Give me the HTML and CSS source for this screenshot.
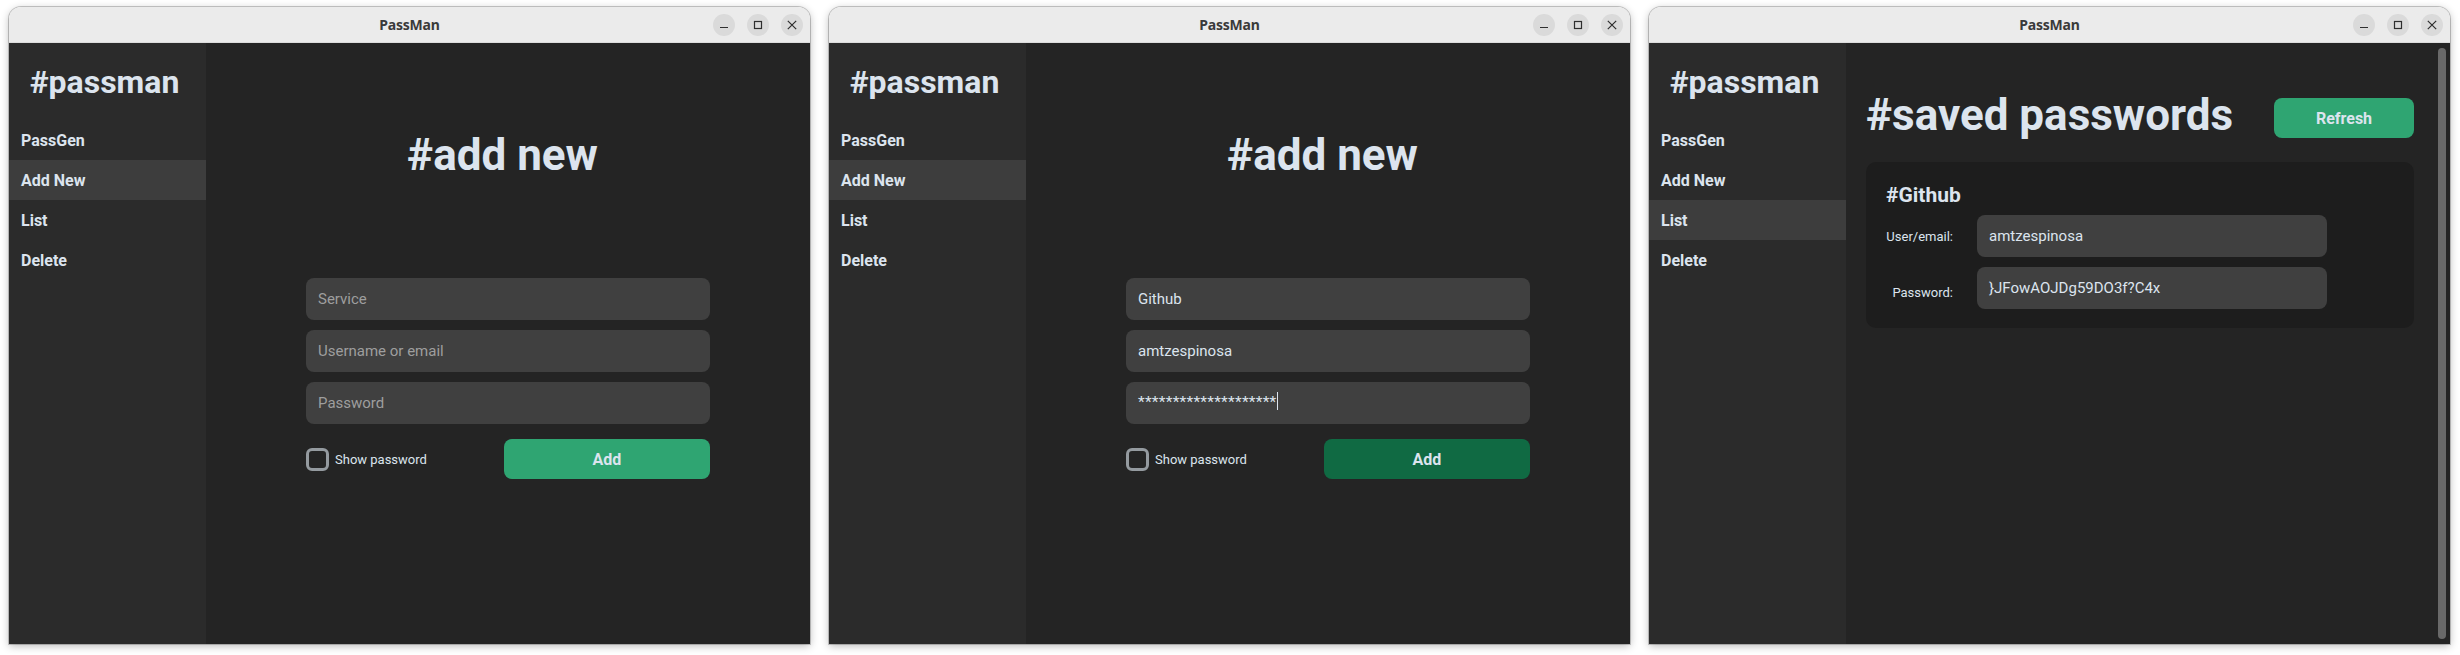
FILE: index.html
```html
<!DOCTYPE html>
<html lang="en">
<head>
<meta charset="utf-8">
<title>PassMan</title>
<link rel="stylesheet" href="styles.css">
</head>
<body>
<div class="desk">

  <!-- Window 1: Add New (empty) -->
  <div class="cell">
    <div class="win">
      <div class="titlebar">
        <span></span>
        <span class="title">PassMan</span>
        <div class="ctrls">
          <span class="ctrl"><svg width="22" height="22" viewBox="0 0 22 22"><path d="M7 13.5h8" class="glyph"/></svg></span>
          <span class="ctrl"><svg width="22" height="22" viewBox="0 0 22 22"><rect x="7.5" y="7.5" width="7" height="7" class="glyph"/></svg></span>
          <span class="ctrl"><svg width="22" height="22" viewBox="0 0 22 22"><path d="M6.8 6.8l8.4 8.4M15.2 6.8l-8.4 8.4" class="glyph"/></svg></span>
        </div>
      </div>
      <div class="content">
        <aside class="side">
          <div class="logo">#passman</div>
          <div class="nav-item">PassGen</div>
          <div class="nav-item active">Add New</div>
          <div class="nav-item">List</div>
          <div class="nav-item">Delete</div>
        </aside>
        <main class="main add">
          <div class="h1">#add new</div>
          <div class="form">
            <div class="input ph">Service</div>
            <div class="input ph">Username or email</div>
            <div class="input ph">Password</div>
            <div class="row">
              <label class="check"><span class="box"></span>Show password</label>
              <div class="btn">Add</div>
            </div>
          </div>
        </main>
      </div>
    </div>
  </div>

  <!-- Window 2: Add New (filled) -->
  <div class="cell">
    <div class="win">
      <div class="titlebar">
        <span></span>
        <span class="title">PassMan</span>
        <div class="ctrls">
          <span class="ctrl"><svg width="22" height="22" viewBox="0 0 22 22"><path d="M7 13.5h8" class="glyph"/></svg></span>
          <span class="ctrl"><svg width="22" height="22" viewBox="0 0 22 22"><rect x="7.5" y="7.5" width="7" height="7" class="glyph"/></svg></span>
          <span class="ctrl"><svg width="22" height="22" viewBox="0 0 22 22"><path d="M6.8 6.8l8.4 8.4M15.2 6.8l-8.4 8.4" class="glyph"/></svg></span>
        </div>
      </div>
      <div class="content">
        <aside class="side">
          <div class="logo">#passman</div>
          <div class="nav-item">PassGen</div>
          <div class="nav-item active">Add New</div>
          <div class="nav-item">List</div>
          <div class="nav-item">Delete</div>
        </aside>
        <main class="main add">
          <div class="h1">#add new</div>
          <div class="form">
            <div class="input">Github</div>
            <div class="input">amtzespinosa</div>
            <div class="input pw"><span class="stars">********************</span><span class="caret"></span></div>
            <div class="row">
              <label class="check"><span class="box"></span>Show password</label>
              <div class="btn hover">Add</div>
            </div>
          </div>
        </main>
      </div>
    </div>
  </div>

  <!-- Window 3: List -->
  <div class="cell">
    <div class="win">
      <div class="titlebar">
        <span></span>
        <span class="title">PassMan</span>
        <div class="ctrls">
          <span class="ctrl"><svg width="22" height="22" viewBox="0 0 22 22"><path d="M7 13.5h8" class="glyph"/></svg></span>
          <span class="ctrl"><svg width="22" height="22" viewBox="0 0 22 22"><rect x="7.5" y="7.5" width="7" height="7" class="glyph"/></svg></span>
          <span class="ctrl"><svg width="22" height="22" viewBox="0 0 22 22"><path d="M6.8 6.8l8.4 8.4M15.2 6.8l-8.4 8.4" class="glyph"/></svg></span>
        </div>
      </div>
      <div class="content">
        <aside class="side">
          <div class="logo">#passman</div>
          <div class="nav-item">PassGen</div>
          <div class="nav-item">Add New</div>
          <div class="nav-item active">List</div>
          <div class="nav-item">Delete</div>
        </aside>
        <main class="main list">
          <div class="scroll">
            <div class="hrow">
              <div class="h1 tight">#saved passwords</div>
              <div class="btn small">Refresh</div>
            </div>
            <div class="card">
              <div class="card-title">#Github</div>
              <div class="fields">
                <div class="flabel">User/email:</div>
                <div class="input card-input">amtzespinosa</div>
                <div class="flabel low">Password:</div>
                <div class="input card-input">}JFowAOJDg59DO3f?C4x</div>
              </div>
            </div>
          </div>
          <div class="track"><div class="thumb"></div></div>
        </main>
      </div>
    </div>
  </div>

</div>
</body>
</html>
```

FILE: styles.css
```css
* {
  box-sizing: border-box;
}

body {
  margin: 0;
  width: 2460px;
  height: 655px;
  overflow: hidden;
  background: #ffffff;
  font-family: Roboto, "Liberation Sans", sans-serif;
}

.desk {
  display: flex;
}

.cell {
  width: 820px;
  padding: 7px 10px 0 9px;
}

.win {
  height: 637px;
  display: flex;
  flex-direction: column;
  border-radius: 12px 12px 0 0;
  overflow: hidden;
  box-shadow: 0 0 0 1px rgba(0, 0, 0, 0.2), 0 2px 9px rgba(0, 0, 0, 0.28);
}

.titlebar {
  height: 36px;
  flex: none;
  background: #ebebeb;
  display: grid;
  grid-template-columns: 1fr auto 1fr;
  align-items: center;
  border-bottom: 1px solid #dcdcdc;
}

.title {
  font-family: "Noto Sans", "Open Sans", sans-serif;
  font-weight: 700;
  font-size: 14px;
  color: #3a3a3a;
  letter-spacing: -0.2px;
}

.ctrls {
  justify-self: end;
  display: flex;
  gap: 12px;
  padding-right: 7px;
  padding-top: 1px;
}

.ctrl {
  width: 22px;
  height: 22px;
  border-radius: 50%;
  background: #dadada;
  display: flex;
}

.glyph {
  fill: none;
  stroke: #2e2e2e;
  stroke-width: 1.2;
}

.content {
  flex: 1;
  display: flex;
  min-height: 0;
}

.side {
  width: 197px;
  flex: none;
  background: #2b2b2b;
}

.logo {
  font-weight: 700;
  font-size: 32px;
  line-height: 38px;
  padding-top: 20px;
  padding-right: 6px;
  margin-bottom: 19px;
  text-align: center;
  color: #dce4ee;
}

.nav-item {
  height: 40px;
  padding-left: 12px;
  display: flex;
  align-items: center;
  font-weight: 700;
  font-size: 16px;
  color: #dce4ee;
}

.nav-item.active {
  background: #3d3d3d;
}

.main {
  flex: 1;
  background: #242424;
}

.main.add {
  display: flex;
  flex-direction: column;
  align-items: center;
  padding-top: 87px;
}

.h1 {
  font-weight: 700;
  font-size: 44px;
  line-height: 50px;
  color: #dce4ee;
  white-space: nowrap;
}

.main.add .h1 {
  padding-right: 11px;
}

.form {
  margin-top: 98px;
  width: 404px;
  display: flex;
  flex-direction: column;
  gap: 10px;
}

.input {
  height: 42px;
  border-radius: 8px;
  background: #404040;
  padding-left: 12px;
  display: flex;
  align-items: center;
  font-size: 15px;
  color: #dce4ee;
}

.input.ph {
  color: #9e9e9e;
}

.input.pw {
  align-items: flex-start;
  padding-top: 12px;
}

.stars {
  font-size: 15.5px;
  line-height: 16px;
  letter-spacing: 0.25px;
}

.caret {
  width: 1px;
  height: 18px;
  margin-top: -2px;
  background: #dce4ee;
}

.row {
  margin-top: 5px;
  display: flex;
  align-items: center;
  justify-content: space-between;
}

.check {
  display: flex;
  align-items: center;
  gap: 6px;
  font-size: 13px;
  color: #dce4ee;
}

.box {
  width: 23px;
  height: 23px;
  border: 3px solid #949a9f;
  border-radius: 6px;
}

.btn {
  width: 206px;
  height: 40px;
  border-radius: 8px;
  background: #2fa572;
  color: #dce4ee;
  font-weight: 700;
  font-size: 16px;
  display: flex;
  align-items: center;
  justify-content: center;
}

.btn.hover {
  background: #106a43;
}

.btn.small {
  width: 140px;
}

.main.list {
  display: flex;
}

.scroll {
  flex: 1;
  padding: 55px 24px 0 20px;
}

.hrow {
  height: 40px;
  display: flex;
  align-items: center;
  justify-content: space-between;
}

.h1.tight {
  margin-bottom: 6px;
}

.card {
  margin-top: 24px;
  background: #1d1d1d;
  border-radius: 10px;
  padding: 20px 0 19px 20px;
}

.card-title {
  font-weight: 700;
  font-size: 21px;
  line-height: 26px;
  color: #dce4ee;
  margin-bottom: 7px;
}

.fields {
  display: grid;
  grid-template-columns: 67px 350px;
  column-gap: 24px;
  row-gap: 10px;
  align-items: center;
}

.flabel {
  font-size: 13px;
  color: #dce4ee;
  text-align: right;
  white-space: nowrap;
}

.flabel.low {
  padding-top: 9px;
}

.track {
  width: 8px;
  flex: none;
  margin: 5px 4px 5px 0;
}

.thumb {
  height: 100%;
  border-radius: 4px;
  background: #696969;
}
```
